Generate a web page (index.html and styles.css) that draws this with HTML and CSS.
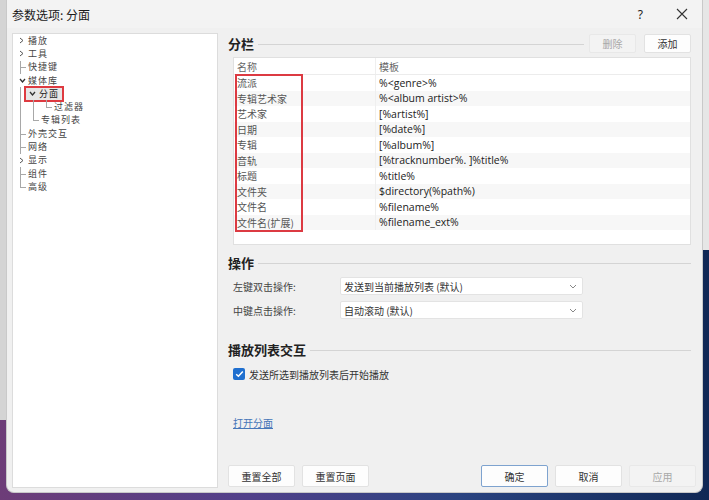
FILE: index.html
```html
<!DOCTYPE html>
<html lang="zh-CN">
<head>
    <meta charset="UTF-8">
    <title>参数选项: 分面</title>
    <link rel="stylesheet" href="styles.css">
</head>
<body>
    <div class="window">
        <div class="titlebar">
            <span class="title">参数选项: 分面</span>
            <span class="help">?</span>
            <svg class="close" width="12" height="12" viewBox="0 0 12 12"><path d="M1 1L11 11M11 1L1 11" stroke="#333" stroke-width="1.1" fill="none"/></svg>
        </div>

        <div class="main">
            <!-- left navigation tree -->
            <div class="tree">
                <div class="node"><span class="tw chev"><svg width="5" height="7" viewBox="0 0 5 7"><path d="M1 1L4 3.5L1 6" stroke="#555" fill="none"/></svg></span>播放</div>
                <div class="node"><span class="tw chev"><svg width="5" height="7" viewBox="0 0 5 7"><path d="M1 1L4 3.5L1 6" stroke="#555" fill="none"/></svg></span>工具</div>
                <div class="node"><span class="tw br"></span>快捷键</div>
                <div class="node"><span class="tw chev"><svg width="7" height="5" viewBox="0 0 7 5"><path d="M1 1L3.5 4L6 1" stroke="#333" stroke-width="1.3" fill="none"/></svg></span>媒体库</div>
                <div class="node"><span class="tw pipe"></span><span class="sel"><span class="chev2"><svg width="7" height="5" viewBox="0 0 7 5"><path d="M1 1L3.5 4L6 1" stroke="#333" stroke-width="1.3" fill="none"/></svg></span>分面</span></div>
                <div class="node"><span class="tw pipe"></span><span class="tw pipe"></span><span class="tw end"></span>过滤器</div>
                <div class="node"><span class="tw pipe"></span><span class="tw end"></span>专辑列表</div>
                <div class="node"><span class="tw br"></span>外壳交互</div>
                <div class="node"><span class="tw br"></span>网络</div>
                <div class="node"><span class="tw chev"><svg width="5" height="7" viewBox="0 0 5 7"><path d="M1 1L4 3.5L1 6" stroke="#555" fill="none"/></svg></span>显示</div>
                <div class="node"><span class="tw br"></span>组件</div>
                <div class="node"><span class="tw end"></span>高级</div>
            </div>

            <div class="page">
                <div class="group-head">
                    <h2>分栏</h2>
                    <span class="rule"></span>
                    <button class="btn small disabled">删除</button>
                    <button class="btn small">添加</button>
                </div>

                <div class="grid">
                    <div class="grid-head"><span class="c1">名称</span><span class="c2">模板</span></div>
                    <div class="row"><span class="c1">流派</span><span class="c2">%&lt;genre&gt;%</span></div>
                    <div class="row"><span class="c1">专辑艺术家</span><span class="c2">%&lt;album artist&gt;%</span></div>
                    <div class="row"><span class="c1">艺术家</span><span class="c2">[%artist%]</span></div>
                    <div class="row"><span class="c1">日期</span><span class="c2">[%date%]</span></div>
                    <div class="row"><span class="c1">专辑</span><span class="c2">[%album%]</span></div>
                    <div class="row"><span class="c1">音轨</span><span class="c2">[%tracknumber%. ]%title%</span></div>
                    <div class="row"><span class="c1">标题</span><span class="c2">%title%</span></div>
                    <div class="row"><span class="c1">文件夹</span><span class="c2">$directory(%path%)</span></div>
                    <div class="row"><span class="c1">文件名</span><span class="c2">%filename%</span></div>
                    <div class="row"><span class="c1">文件名(扩展)</span><span class="c2">%filename_ext%</span></div>
                    <div class="mark"></div>
                </div>

                <div class="group-head ops">
                    <h2>操作</h2>
                    <span class="rule"></span>
                </div>
                <div class="field first">
                    <label>左键双击操作:</label>
                    <div class="combo">发送到当前播放列表 (默认)<svg width="8" height="5" viewBox="0 0 8 5"><path d="M1 1L4 4L7 1" stroke="#888" fill="none"/></svg></div>
                </div>
                <div class="field">
                    <label>中键点击操作:</label>
                    <div class="combo">自动滚动 (默认)<svg width="8" height="5" viewBox="0 0 8 5"><path d="M1 1L4 4L7 1" stroke="#888" fill="none"/></svg></div>
                </div>

                <div class="group-head playlist">
                    <h2>播放列表交互</h2>
                    <span class="rule"></span>
                </div>
                <label class="check">
                    <span class="box"><svg width="9" height="8" viewBox="0 0 9 8"><path d="M1.2 4.2L3.4 6.3L7.8 1.5" stroke="#fff" stroke-width="1.5" fill="none"/></svg></span>
                    发送所选到播放列表后开始播放
                </label>

                <a class="link" href="#">打开分面</a>

                <div class="footer">
                    <button class="btn">重置全部</button>
                    <button class="btn">重置页面</button>
                    <span class="spacer"></span>
                    <button class="btn default">确定</button>
                    <button class="btn">取消</button>
                    <button class="btn disabled">应用</button>
                </div>
            </div>
        </div>
    </div>
</body>
</html>
```

FILE: styles.css
```css
html, body{
    margin: 0;
    width: 709px;
    height: 500px;
    overflow: hidden;
}
body{
    font-family: "Noto Sans CJK SC", "Noto Sans", sans-serif;
    font-size: 10px;
    color: #333;
    background:
        linear-gradient(#d4d4d4, #d4d4d4) left top / 6px 420px no-repeat,
        linear-gradient(#e6e6e6, #e6e6e6) right top / 6px 250px no-repeat,
        linear-gradient(90deg, #6d3d78, #51408a 35%, #2a4380 65%, #102855);
}
.window{
    margin: 0 6px;
    height: 493px;
    box-sizing: border-box;
    background: #f0f0f0;
    border: 1px solid #c9c9c9;
    border-top: none;
    border-radius: 0 0 8px 8px;
    display: flex;
    flex-direction: column;
    overflow: hidden;
}
.titlebar{
    height: 28px;
    flex: none;
    display: flex;
    align-items: center;
    background: #f3f3f3;
    padding: 0 0 0 5px;
}
.title{
    font-size: 12px;
    color: #1a1a1a;
    flex: 1;
    margin-top: 1px;
}
.help{
    font-family: "Noto Sans", sans-serif;
    font-size: 12px;
    color: #222;
    margin-right: 33px;
}
.close{
    margin-right: 14px;
}

.main{
    flex: 1;
    display: flex;
    padding: 5px 6px 4px 5px;
    gap: 10px;
    min-height: 0;
}

/* tree */
.tree{
    width: 206px;
    flex: none;
    box-sizing: border-box;
    background: #fff;
    border: 1px solid #dcdcdc;
    padding: 0 0 0 2px;
    color: #444;
    font-size: 9px;
    letter-spacing: 1px;
}
.node{
    height: 13.3px;
    display: flex;
    align-items: center;
    white-space: nowrap;
    line-height: 12px;
}
.tw{
    width: 13px;
    height: 100%;
    flex: none;
    position: relative;
}
.tw.chev{
    display: flex;
    align-items: center;
    padding-left: 4px;
    box-sizing: border-box;
}
.tw.br::before, .tw.pipe::before, .tw.end::before{
    content: "";
    position: absolute;
    left: 5px;
    top: 0;
    bottom: 0;
    border-left: 1px solid #a8a8a8;
}
.tw.end::before{
    bottom: 50%;
}
.tw.br::after, .tw.end::after{
    content: "";
    position: absolute;
    left: 5px;
    width: 6px;
    top: 50%;
    border-top: 1px solid #a8a8a8;
}
.sel{
    display: flex;
    align-items: center;
    height: 12px;
    margin-left: -2px;
    padding: 0 3px 0 3px;
    background: #e6e6e6;
    outline: 2px solid #de3a40;
    outline-offset: 0;
    color: #222;
}
.chev2{
    width: 10px;
    display: flex;
}

/* right page */
.page{
    flex: 1;
    display: flex;
    flex-direction: column;
    min-width: 0;
}
.group-head{
    height: 21px;
    display: flex;
    align-items: center;
    flex: none;
    padding-right: 5px;
}
.group-head h2{
    margin: 0;
    font-size: 13px;
    font-weight: 600;
    color: #222;
}
.rule{
    flex: 1;
    border-top: 1px solid #d4d4d4;
    margin: 1px 0 0 4px;
}
.btn{
    font-family: "Noto Sans CJK SC", sans-serif;
    font-size: 10px;
    color: #333;
    width: 67px;
    height: 22px;
    background: #fdfdfd;
    border: 1px solid #e2e2e2;
    border-radius: 2px;
    padding: 0;
}
.btn.small{
    width: 47px;
    height: 19px;
    margin-left: 8px;
}
.group-head .rule + .btn.small{
    margin-left: 5px;
}
.btn.disabled{
    color: #a8a8a8;
    background: #f3f3f3;
    border-color: #e8e8e8;
}
.btn.default{
    border-color: #7ea3cf;
}

.grid{
    position: relative;
    margin: 3px 5px 0 5px;
    height: 188px;
    box-sizing: border-box;
    background: #fff;
    border: 1px solid #e0e0e0;
    flex: none;
}
.grid-head, .row{
    display: flex;
    align-items: center;
}
.grid-head{
    height: 16px;
    border-bottom: 1px solid #ececec;
    color: #666;
}
.row{
    height: 15.5px;
    color: #555;
}
.row:nth-child(odd){
    background: #f7f7f7;
}
.c1{
    width: 142px;
    flex: none;
    box-sizing: border-box;
    padding-left: 3px;
    height: 100%;
    display: flex;
    align-items: center;
    border-right: 1px solid #efefef;
}
.c2{
    padding-left: 3px;
}
.row .c2{
    font-family: "Open Sans", "Noto Sans", sans-serif;
    font-size: 10.5px;
    color: #222;
}
.mark{
    position: absolute;
    left: 1px;
    top: 16px;
    width: 68px;
    height: 158px;
    box-sizing: border-box;
    border: 2px solid #dc3a42;
}

.group-head.ops{
    margin-top: 7px;
}
.field{
    display: flex;
    align-items: center;
    height: 18px;
    margin: 6px 0 0 5px;
}
.field.first{
    margin-top: 4px;
}
.field label{
    width: 107px;
    flex: none;
    color: #444;
}
.combo{
    width: 243px;
    height: 18px;
    box-sizing: border-box;
    background: #fff;
    border: 1px solid #e3e3e3;
    border-radius: 2px;
    display: flex;
    align-items: center;
    justify-content: space-between;
    padding: 0 5px 0 3px;
    color: #333;
}

.group-head.playlist{
    margin-top: 20px;
}
.check{
    display: flex;
    align-items: center;
    height: 14px;
    margin: 7px 0 0 5px;
    color: #333;
}
.box{
    width: 12px;
    height: 12px;
    border-radius: 2px;
    background: #1f6fcf;
    display: flex;
    align-items: center;
    justify-content: center;
    margin-right: 4px;
}
.link{
    align-self: flex-start;
    margin: 34px 0 0 5px;
    height: 14px;
    color: #4676b8;
    text-decoration: underline;
}

.footer{
    margin-top: auto;
    display: flex;
    gap: 7px;
    padding-bottom: 1px;
}
.spacer{
    flex: 1;
}
```
